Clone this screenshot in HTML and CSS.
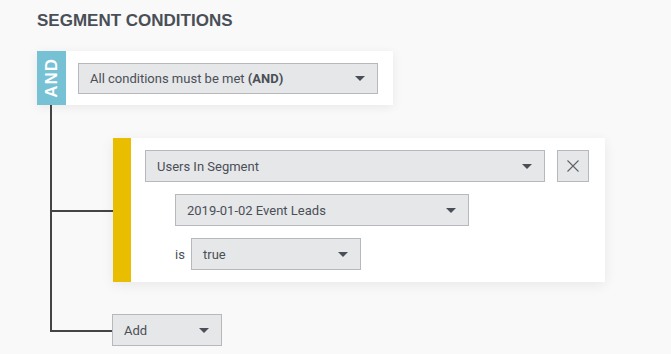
FILE: index.html
```html
<!DOCTYPE html>
<html lang="en">
<head>
  <meta charset="UTF-8">
  <title>Segment Conditions</title>
  <link rel="stylesheet" href="styles.css">
</head>
<body>
  <h1>SEGMENT CONDITIONS</h1>

  <div class="group">
    <div class="group-head">
      <div class="op-label"><span>AND</span></div>
      <div class="group-body">
        <div class="select select-wide">
          <span>All conditions must be met <b>(AND)</b></span>
          <i class="caret"></i>
        </div>
      </div>
    </div>

    <div class="children">
      <div class="branch">
        <div class="stem">
          <div class="stem-gap"></div>
          <div class="stem-top"></div>
          <div class="stem-bottom"></div>
        </div>
        <div class="branch-body">
          <div class="condition">
            <div class="cond-bar"></div>
            <div class="cond-body">
              <div class="cond-row">
                <div class="select select-field">
                  <span>Users In Segment</span>
                  <i class="caret"></i>
                </div>
                <button class="remove" title="Remove">
                  <svg width="12" height="12" viewBox="0 0 12 12"><path d="M0.5 0.5 L11.5 11.5 M11.5 0.5 L0.5 11.5" stroke="#5d6168" stroke-width="1.1" fill="none"/></svg>
                </button>
              </div>
              <div class="cond-row indent">
                <div class="select select-segment">
                  <span>2019-01-02 Event Leads</span>
                  <i class="caret"></i>
                </div>
              </div>
              <div class="cond-row indent">
                <span class="is-label">is</span>
                <div class="select select-value">
                  <span>true</span>
                  <i class="caret"></i>
                </div>
              </div>
            </div>
          </div>
        </div>
      </div>

      <div class="branch last">
        <div class="stem">
          <div class="stem-gap"></div>
          <div class="stem-top"></div>
          <div class="stem-bottom"></div>
        </div>
        <div class="branch-body">
          <div class="select select-add">
            <span>Add</span>
            <i class="caret"></i>
          </div>
        </div>
      </div>
    </div>
  </div>
</body>
</html>
```

FILE: styles.css
```css
body {
  margin: 0;
  padding: 11px 0 0 37px;
  background: #f9f9f9;
  font-family: Roboto, 'Liberation Sans', sans-serif;
  color: #4a4f57;
}
h1 {
  margin: 0 0 20px;
  font-family: 'Liberation Sans', Arial, sans-serif;
  font-size: 17px;
  line-height: 20px;
  font-weight: 700;
  color: #4a4f57;
}
.group-head {
  display: flex;
  width: 356px;
  background: #fff;
  box-shadow: 0 2px 10px rgba(0, 0, 0, 0.07);
}
.op-label {
  width: 29px;
  flex: none;
  background: #77c1d4;
  display: flex;
  align-items: center;
  justify-content: center;
}
.op-label span {
  writing-mode: vertical-rl;
  transform: rotate(180deg);
  color: #fff;
  font-family: 'Liberation Sans', Arial, sans-serif;
  font-weight: 700;
  font-size: 17px;
  letter-spacing: 1px;
}
.group-body {
  flex: 1;
  padding: 12px 15px 11px 12px;
}
.select {
  box-sizing: border-box;
  height: 32px;
  display: flex;
  align-items: center;
  justify-content: space-between;
  padding: 0 12px 0 11px;
  background: #e6e7e9;
  border: 1px solid #b6b8bb;
  font-size: 13px;
  color: #4a4f57;
}
.select b {
  font-weight: 700;
}
.select-wide {
  height: 31px;
}
.caret {
  width: 0;
  height: 0;
  border-left: 5px solid transparent;
  border-right: 5px solid transparent;
  border-top: 5px solid #4a4f57;
}

.children {
  margin-left: 13px;
}
.branch {
  display: flex;
}
.stem {
  width: 63px;
  flex: none;
  display: flex;
  flex-direction: column;
}
.stem-gap {
  height: 33px;
  border-left: 2px solid #444;
}
.stem-top {
  flex: 1;
  border-left: 2px solid #444;
  border-bottom: 2px solid #444;
  margin-bottom: -1px;
}
.stem-bottom {
  flex: 1;
  border-left: 2px solid #444;
}
.branch.last .stem-gap {
  height: 32px;
}
.branch.last .stem-bottom {
  border-left-color: transparent;
}
.branch-body {
  padding-top: 33px;
}
.branch.last .branch-body {
  padding-top: 32px;
  margin-left: -1px;
}

.condition {
  display: flex;
  width: 492px;
  background: #fff;
  box-shadow: 0 3px 12px rgba(0, 0, 0, 0.07);
}
.cond-bar {
  width: 18px;
  flex: none;
  background: #e9be00;
}
.cond-body {
  flex: 1;
  padding: 12px 16px 12px 14px;
  display: flex;
  flex-direction: column;
  gap: 12px;
}
.cond-row {
  display: flex;
  align-items: center;
  gap: 12px;
}
.cond-row.indent {
  padding-left: 30px;
  gap: 7px;
}
.select-field {
  width: 400px;
}
.remove {
  width: 32px;
  height: 32px;
  padding: 0;
  display: flex;
  align-items: center;
  justify-content: center;
  background: #e6e7e9;
  border: 1px solid #b6b8bb;
}
.select-segment {
  width: 294px;
}
.is-label {
  width: 9px;
  font-size: 13px;
  color: #4a4f57;
}
.select-value {
  width: 170px;
}
.select-add {
  width: 110px;
}
```
